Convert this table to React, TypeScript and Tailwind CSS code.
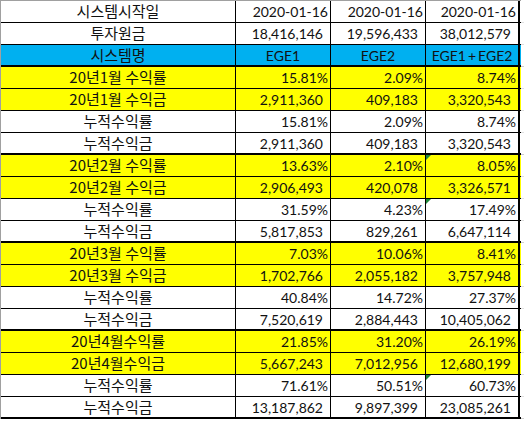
import React from "react";

type Kind = "date" | "num" | "pct" | "head";
type Row = {
  label: string;
  vals: string[];
  kind: Kind;
  bg: "white" | "yellow" | "blue";
  thick?: boolean;
  green?: boolean;
};

const rows: Row[] = [
  { label: "시스템시작일", vals: ["2020-01-16", "2020-01-16", "2020-01-16"], kind: "date", bg: "white" },
  { label: "투자원금", vals: ["18,416,146", "19,596,433", "38,012,579"], kind: "num", bg: "white" },
  { label: "시스템명", vals: ["EGE1", "EGE2", "EGE1+EGE2"], kind: "head", bg: "blue", thick: true },
  { label: "20년1월 수익률", vals: ["15.81%", "2.09%", "8.74%"], kind: "pct", bg: "yellow" },
  { label: "20년1월 수익금", vals: ["2,911,360", "409,183", "3,320,543"], kind: "num", bg: "yellow" },
  { label: "누적수익률", vals: ["15.81%", "2.09%", "8.74%"], kind: "pct", bg: "white" },
  { label: "누적수익금", vals: ["2,911,360", "409,183", "3,320,543"], kind: "num", bg: "white", thick: true },
  { label: "20년2월 수익률", vals: ["13.63%", "2.10%", "8.05%"], kind: "pct", bg: "yellow", green: true },
  { label: "20년2월 수익금", vals: ["2,906,493", "420,078", "3,326,571"], kind: "num", bg: "yellow" },
  { label: "누적수익률", vals: ["31.59%", "4.23%", "17.49%"], kind: "pct", bg: "white", green: true },
  { label: "누적수익금", vals: ["5,817,853", "829,261", "6,647,114"], kind: "num", bg: "white", thick: true },
  { label: "20년3월 수익률", vals: ["7.03%", "10.06%", "8.41%"], kind: "pct", bg: "yellow" },
  { label: "20년3월 수익금", vals: ["1,702,766", "2,055,182", "3,757,948"], kind: "num", bg: "yellow" },
  { label: "누적수익률", vals: ["40.84%", "14.72%", "27.37%"], kind: "pct", bg: "white" },
  { label: "누적수익금", vals: ["7,520,619", "2,884,443", "10,405,062"], kind: "num", bg: "white", thick: true },
  { label: "20년4월수익률", vals: ["21.85%", "31.20%", "26.19%"], kind: "pct", bg: "yellow" },
  { label: "20년4월수익금", vals: ["5,667,243", "7,012,956", "12,680,199"], kind: "num", bg: "yellow" },
  { label: "누적수익률", vals: ["71.61%", "50.51%", "60.73%"], kind: "pct", bg: "white", green: true },
  { label: "누적수익금", vals: ["13,187,862", "9,897,399", "23,085,261"], kind: "num", bg: "white", thick: true },
];

const bgClass = (bg: Row["bg"]) =>
  bg === "yellow" ? "bg-[#ffff00]" : bg === "blue" ? "bg-[#00b0f0]" : "bg-white";

const korean = { fontFamily: '"Noto Sans CJK KR", "Noto Sans", sans-serif' };
const latin = { fontFamily: 'Lato, "Noto Sans CJK KR", sans-serif' };

function ValueCell({ v, kind, idx, green, last }: { v: string; kind: Kind; idx: number; green?: boolean; last: boolean }) {
  const widths = ["w-[95px]", "w-[95px]", "w-[94px]"];
  const align =
    kind === "head"
      ? "justify-center"
      : kind === "num"
      ? "justify-end pr-[7px]"
      : "justify-end pr-[2px]";
  return (
    <div
      className={`relative flex items-center ${widths[idx]} ${align} ${
        last ? "border-r-2" : "border-r"
      } border-black text-[14px] text-[#111]`}
      style={latin}
    >
      {green && idx === 2 && (
        <div className="absolute left-0 top-0 h-0 w-0 border-l-[5px] border-b-[5px] border-l-[#1e8a3a] border-b-transparent border-t-[#1e8a3a]" />
      )}
      {kind === "head" && v.includes("+") ? (
        <span>
          EGE1<span className="mx-[2px]">+</span>EGE2
        </span>
      ) : (
        <span>{v}</span>
      )}
    </div>
  );
}

export default function App() {
  return (
    <div className="w-[524px] h-[422px] bg-white overflow-hidden relative">
      <div className="flex">
        <div className="border-l border-t border-[#a0a0a0] w-[521px]">
          {rows.map((r, i) => (
            <div
              key={i}
              className={`flex h-[22px] ${bgClass(r.bg)} ${r.thick ? "border-b-2" : "border-b"} border-black`}
            >
              <div
                className="flex w-[235px] items-center justify-center border-r border-black text-[15px] text-[#111]"
                style={korean}
              >
                {r.label}
              </div>
              {r.vals.map((v, j) => (
                <ValueCell key={j} v={v} kind={r.kind} idx={j} green={r.green} last={j === 2} />
              ))}
            </div>
          ))}
        </div>
        <div className="w-[3px] pt-[1px]">
          {rows.map((r, i) => (
            <div key={i} className={`h-[22px] border-b ${r.thick ? "border-[#d0d0d0]" : "border-[#e0e0e0]"}`} />
          ))}
        </div>
      </div>
    </div>
  );
}
